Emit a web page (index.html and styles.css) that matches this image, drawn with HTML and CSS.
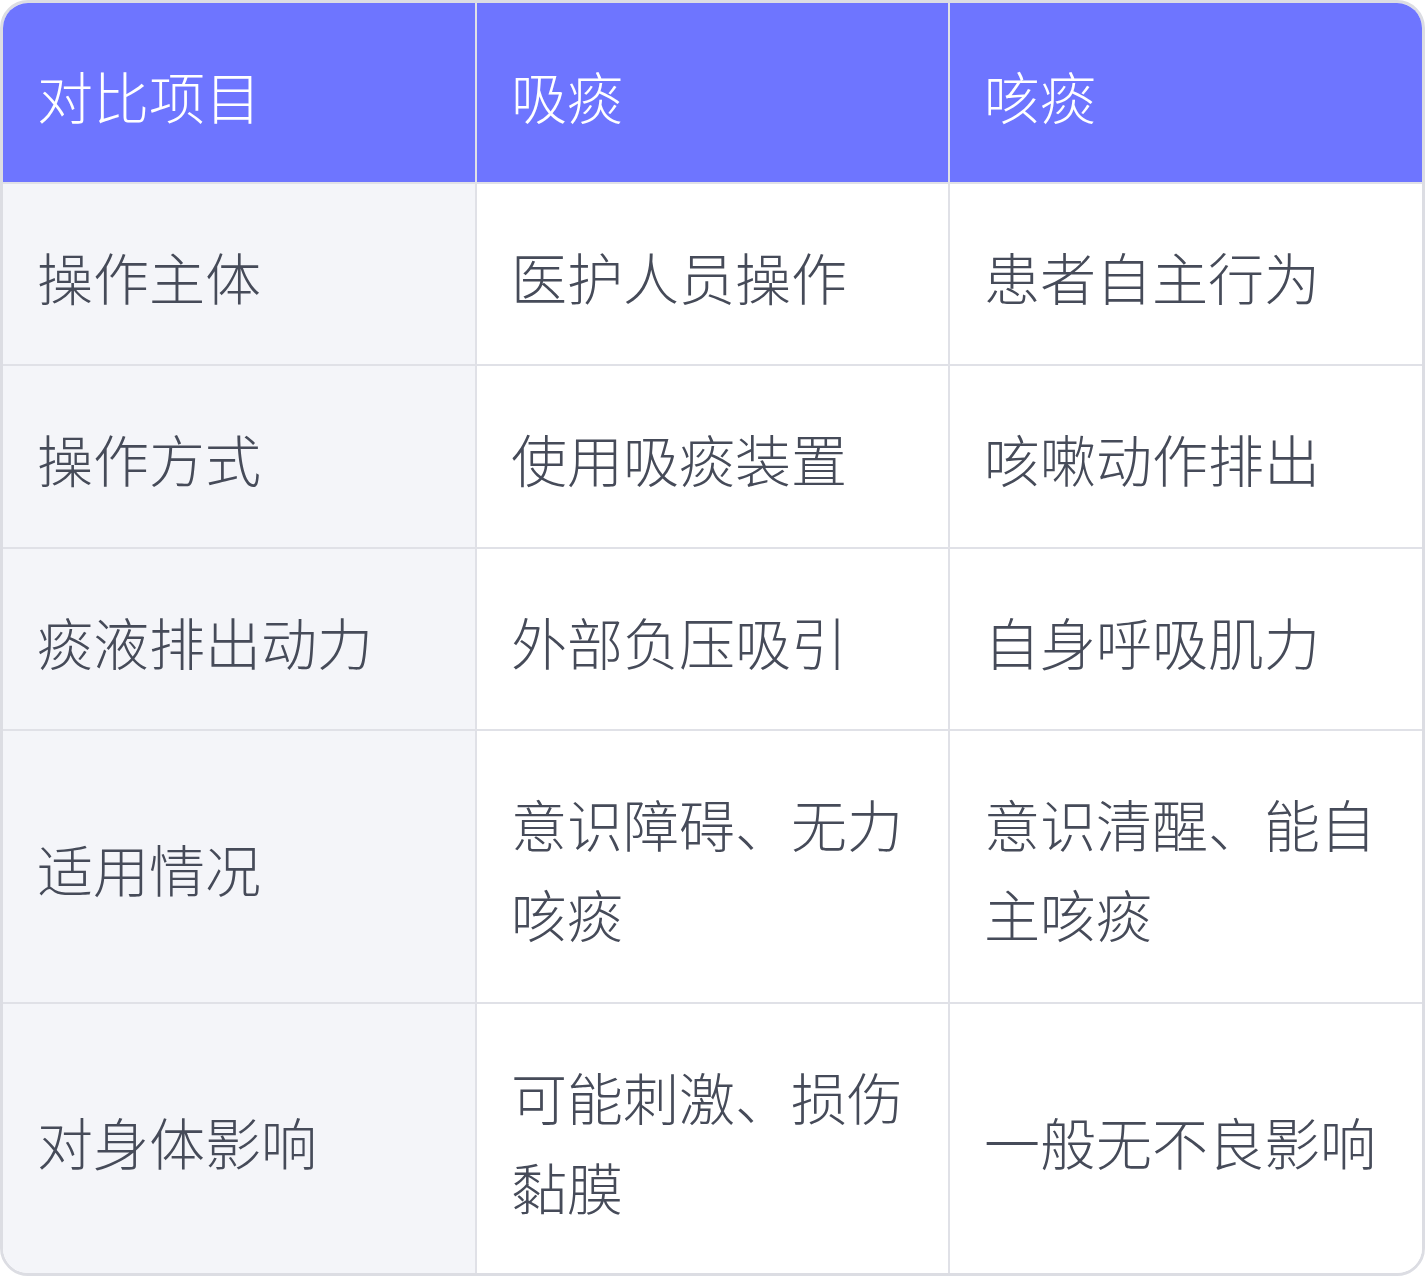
FILE: index.html
```html
<!DOCTYPE html>
<html lang="zh">
<head>
<meta charset="utf-8">
<link rel="stylesheet" href="styles.css">
</head>
<body>
<div class="wrap">
<table class="cmp">
<thead>
<tr><th>对比项目</th><th>吸痰</th><th>咳痰</th></tr>
</thead>
<tbody>
<tr><td>操作主体</td><td>医护人员操作</td><td>患者自主行为</td></tr>
<tr><td>操作方式</td><td>使用吸痰装置</td><td>咳嗽动作排出</td></tr>
<tr><td>痰液排出动力</td><td>外部负压吸引</td><td>自身呼吸肌力</td></tr>
<tr><td>适用情况</td><td>意识障碍、无力咳痰</td><td>意识清醒、能自主咳痰</td></tr>
<tr><td>对身体影响</td><td>可能刺激、损伤黏膜</td><td>一般无不良影响</td></tr>
</tbody>
</table>
</div>
</body>
</html>
```
FILE: styles.css
```css
html, body { margin: 0; padding: 0; background: #ffffff; }
.wrap {
  width: 1425px;
  height: 1276px;
  box-sizing: border-box;
  border: 3px solid #dcdde3;
  border-radius: 28px;
  overflow: hidden;
}
.cmp {
  width: 100%;
  border-collapse: collapse;
  table-layout: fixed;
  font-family: "Noto Sans CJK SC", "Noto Sans", sans-serif;
  font-size: 56px;
  line-height: 90px;
  font-weight: 300;
}
.cmp th, .cmp td {
  text-align: left;
  vertical-align: middle;
  padding: 47px 34px 43.5px 34px;
  border: 2px solid #e0e1e7;
}
.cmp thead th { padding-bottom: 41.5px; border-top: none; }
.cmp tr > :first-child { border-left: none; }
.cmp tr > :last-child { border-right: none; }
.cmp tbody tr:last-child td { border-bottom: none; }
.cmp th {
  background: #6e75ff;
  color: #ffffff;
  font-weight: 300;
}
.cmp td { color: #464b59; background: #ffffff; }
.cmp td:first-child { background: #f4f5f9; }
```
